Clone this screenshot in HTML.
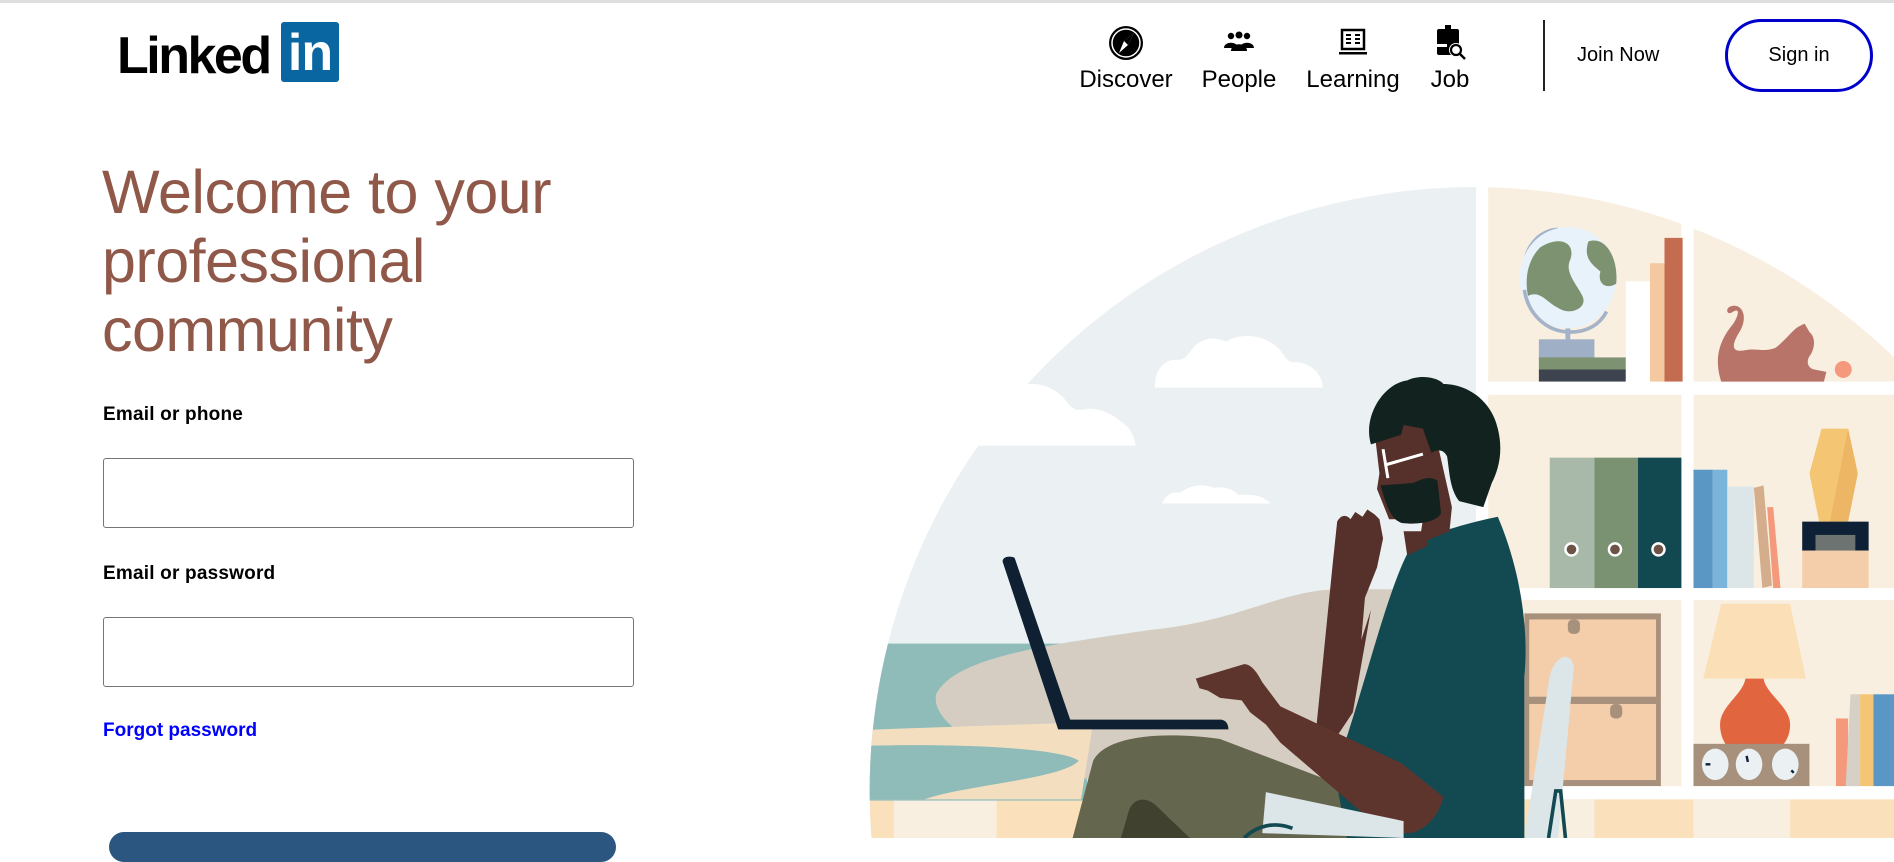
<!DOCTYPE html>
<html><head><meta charset="utf-8"><style>
*{margin:0;padding:0;box-sizing:border-box}
body{width:1894px;height:838px;overflow:hidden;background:#fff;font-family:"Liberation Sans",Arial,sans-serif;position:relative}
.topline{position:absolute;left:0;top:0;width:1894px;height:3px;background:#dedede}
.abs{position:absolute}
.logo{left:117px;top:22px;height:60px}
.linked{position:absolute;left:0;top:6px;font-size:52px;font-weight:bold;letter-spacing:-2.5px;color:#000;line-height:56px}
.in{position:absolute;left:164px;top:0;width:58px;height:60px;background:#0a66a0;border-radius:3px;color:#fff;font-weight:bold;font-size:52px;line-height:62px;text-align:center;letter-spacing:-1px}
.nav{top:24px;text-align:center;font-size:24px;color:#000}
.nav svg{display:block;margin:0 auto 4px}
.divider{left:1543px;top:20px;width:2px;height:71px;background:#222}
.join{left:1577px;top:44px;font-size:20px}
.signin{left:1725px;top:19px;width:148px;height:73px;border:3px solid #0000cc;border-radius:38px;font-size:20px;text-align:center;line-height:67px}
h1{position:absolute;left:102px;top:158px;font-weight:normal;font-size:61px;line-height:69px;color:#8f5849;letter-spacing:-0.5px}
.lbl{left:103px;font-size:19px;font-weight:bold;color:#000;letter-spacing:0.2px}
.inp{left:103px;width:531px;height:70px;border:1px solid #767676;border-radius:3px}
.forgot{left:103px;top:720px;font-size:19px;font-weight:bold;color:#0000ff}
.btn{left:109px;top:832px;width:507px;height:30px;background:#2a5680;border-radius:26px}
</style></head><body>
<div class="topline"></div>
<div class="abs logo"><div class="linked">Linked</div><div class="in">in</div></div>

<div class="abs nav" style="left:1076px;width:100px">
<svg width="38" height="38" viewBox="0 0 38 38"><circle cx="19" cy="19" r="17" fill="#000"/><circle cx="19" cy="19" r="14" fill="none" stroke="#fff" stroke-width="1.5"/><path d="M27 9 L21 21 L12 29 L17 17 Z" fill="#fff"/><path d="M27 9 L17 17 L21 21Z" fill="#000"/></svg>Discover</div>
<div class="abs nav" style="left:1189px;width:100px">
<svg width="38" height="38" viewBox="0 0 38 38"><circle cx="11" cy="12" r="3.2" fill="#000"/><circle cx="19" cy="11" r="3.5" fill="#000"/><circle cx="27" cy="12" r="3.2" fill="#000"/><path d="M4 24 C4 17 18 17 18 24 Z M20 24 C20 17 34 17 34 24Z M11 27 C11 18 27 18 27 27Z" fill="#000"/></svg>People</div>
<div class="abs nav" style="left:1303px;width:100px">
<svg width="38" height="38" viewBox="0 0 38 38"><rect x="8" y="6" width="22" height="19" fill="none" stroke="#000" stroke-width="2.5"/><path d="M12 11h5M12 15h5M12 19h5M21 11h5M21 15h5M21 19h5" stroke="#000" stroke-width="2"/><rect x="5" y="28" width="28" height="2.5" fill="#000"/></svg>Learning</div>
<div class="abs nav" style="left:1410px;width:80px">
<svg width="38" height="38" viewBox="0 0 38 38"><rect x="14" y="1" width="6" height="5" fill="#000"/><rect x="6" y="5" width="22" height="26" rx="2" fill="#000"/><rect x="6" y="20" width="10" height="3" fill="#fff"/><circle cx="25" cy="26" r="7" fill="#fff"/><circle cx="25" cy="26" r="5" fill="none" stroke="#000" stroke-width="2.2"/><path d="M29 30 L34 35" stroke="#000" stroke-width="2.5"/></svg>Job</div>
<div class="abs divider"></div>
<div class="abs join">Join Now</div>
<div class="abs signin">Sign in</div>

<h1>Welcome to your<br>professional<br>community</h1>
<div class="abs lbl" style="top:404px">Email or phone</div>
<div class="abs inp" style="top:458px"></div>
<div class="abs lbl" style="top:563px">Email or password</div>
<div class="abs inp" style="top:617px"></div>
<div class="abs forgot">Forgot password</div>
<div class="abs btn"></div>

<svg class="abs" style="left:0;top:0" width="1894" height="838" viewBox="0 0 1568 694" preserveAspectRatio="none">
<defs><clipPath id="c"><circle cx="1220" cy="655" r="500"/></clipPath></defs>
<g clip-path="url(#c)">
<rect x="700" y="140" width="870" height="560" fill="#ebf1f3"/>
<rect x="1222" y="140" width="350" height="560" fill="#fff"/>
<rect x="1232" y="150" width="160" height="166" fill="#f9efe1"/>
<rect x="1402" y="150" width="170" height="166" fill="#f9efe1"/>
<rect x="1232" y="327" width="160" height="160" fill="#f9efe1"/>
<rect x="1402" y="327" width="170" height="160" fill="#f9efe1"/>
<rect x="1232" y="497" width="160" height="154" fill="#f9efe1"/>
<rect x="1402" y="497" width="170" height="154" fill="#f9efe1"/>
<rect x="720" y="662" width="850" height="40" fill="#fae0bb"/>
<rect x="740" y="662" width="85" height="40" fill="#f9efe1"/>
<rect x="1290" y="662" width="30" height="40" fill="#f9efe1"/>
<rect x="1402" y="662" width="80" height="40" fill="#f9efe1"/>
<path d="M956,321 C956,305 965,297 975,298 C980,298 982,295 985,292 C992,280 1005,278 1015,283 C1025,276 1045,276 1058,288 C1065,296 1065,300 1072,300 C1085,300 1095,310 1095,321Z" fill="#fff"/>
<path d="M700,369 L700,318 L855,318 C870,318 880,328 885,335 C890,340 893,340 897,339 C910,336 925,345 935,355 C938,360 940,365 940,369Z" fill="#fff"/>
<path d="M962,417 C965,410 970,407 977,408 C985,402 995,400 1005,404 C1012,403 1020,404 1025,410 C1035,409 1045,410 1052,417Z" fill="#fff"/>
<rect x="700" y="533" width="200" height="130" fill="#8fbcb9"/>
<path d="M775,575 C790,545 860,535 950,522 C1030,514 1060,488 1110,488 L1160,488 L1160,660 L900,645 C820,630 770,600 775,575Z" fill="#d5cdc2"/>
<path d="M700,605 L905,598 L895,662 L700,662Z" fill="#f3dfc0"/>
<path d="M700,618 C800,615 880,620 893,630 C880,645 800,650 765,662 L700,662Z" fill="#8fbcb9"/>
<path d="M1262,235 C1258,205 1275,190 1290,190" fill="none" stroke="#a4b3c8" stroke-width="3"/>
<ellipse cx="1298" cy="230" rx="40" ry="42" fill="#e8f2fb"/>
<path d="M1275,205 C1290,195 1305,200 1300,215 C1295,225 1305,235 1310,245 C1315,255 1300,262 1290,255 C1280,250 1275,240 1265,245 C1262,230 1265,215 1275,205Z M1315,200 C1330,195 1340,215 1338,235 C1330,240 1322,235 1325,225 C1320,220 1310,215 1315,200Z" fill="#7c9270"/>
<path d="M1262,240 C1265,260 1280,275 1300,275 C1315,275 1325,268 1330,258" fill="none" stroke="#a4b3c8" stroke-width="3"/>
<rect x="1296" y="272" width="4" height="12" fill="#a4b3c8"/>
<rect x="1274" y="281" width="46" height="16" fill="#9fb0c6"/>
<rect x="1274" y="296" width="72" height="10" fill="#7c9270"/>
<rect x="1274" y="306" width="72" height="10" fill="#3d4450"/>
<rect x="1346" y="233" width="20" height="83" fill="#fff"/>
<rect x="1366" y="218" width="12" height="98" fill="#f4c8a0"/>
<rect x="1378" y="197" width="15" height="119" fill="#c46c4f"/>
<path d="M1425,316 C1418,295 1425,280 1435,268 C1440,260 1440,255 1435,258 C1430,262 1428,256 1432,254 C1442,250 1448,262 1440,275 C1432,288 1435,292 1445,290 C1455,288 1460,292 1470,288 C1478,282 1485,272 1490,270 L1494,268 L1498,275 C1504,280 1502,290 1498,295 C1495,300 1497,305 1502,306 L1512,308 L1510,316Z" fill="#b87469"/>
<circle cx="1526" cy="306" r="7" fill="#f4997b"/>
<rect x="1283" y="379" width="37" height="108" fill="#a9b9a9"/>
<rect x="1320" y="379" width="36" height="108" fill="#7a9271"/>
<rect x="1356" y="379" width="36" height="108" fill="#12484f"/>
<g fill="#6b5446" stroke="#fff" stroke-width="2"><circle cx="1301" cy="455" r="5"/><circle cx="1337" cy="455" r="5"/><circle cx="1373" cy="455" r="5"/></g>
<rect x="1402" y="389" width="16" height="98" fill="#5a97c4"/>
<rect x="1418" y="389" width="12" height="98" fill="#7ab4da"/>
<rect x="1430" y="403" width="22" height="84" fill="#dce6e9"/>
<path d="M1452,404 L1460,402 L1467,485 L1459,487Z" fill="#d4ae8c"/>
<path d="M1463,420 L1468,420 L1474,487 L1468,487Z" fill="#f4997b"/>
<path d="M1508,355 L1530,355 L1538,392 L1530,432 L1506,432 L1498,392Z" fill="#f4c673"/>
<path d="M1530,355 L1538,392 L1530,432 L1515,432Z" fill="#ecb665"/>
<rect x="1492" y="432" width="55" height="24" fill="#0d2035"/>
<rect x="1503" y="443" width="33" height="13" fill="#6d7370"/>
<rect x="1492" y="456" width="55" height="31" fill="#f4cdaa"/>
<rect x="1262" y="508" width="113" height="143" fill="#a8917c"/>
<rect x="1266" y="513" width="105" height="64" fill="#f4cdaa"/>
<rect x="1266" y="583" width="105" height="63" fill="#f4cdaa"/>
<rect x="1298" y="513" width="10" height="12" rx="4" fill="#a8917c"/>
<rect x="1333" y="583" width="10" height="12" rx="4" fill="#a8917c"/>
<path d="M1425,500 L1482,500 L1495,562 L1410,562Z" fill="#fbe0b7"/>
<path d="M1445,562 L1460,562 C1462,575 1482,585 1482,600 C1482,612 1475,618 1475,618 L1430,618 C1430,618 1424,612 1424,600 C1424,585 1443,575 1445,562Z" fill="#e1653f"/>
<rect x="1402" y="616" width="96" height="35" fill="#a8917c"/>
<g fill="#ebf1f3"><ellipse cx="1420" cy="633" rx="11" ry="13"/><ellipse cx="1448" cy="633" rx="11" ry="13"/><ellipse cx="1478" cy="633" rx="11" ry="13"/></g>
<path d="M1412,633h4M1446,626l1,5M1483,638l2,2" stroke="#0d2035" stroke-width="2"/>
<rect x="1520" y="595" width="10" height="56" fill="#f4997b"/>
<path d="M1532,575 L1540,575 L1540,651 L1528,651Z" fill="#d6d0c6"/>
<rect x="1540" y="575" width="11" height="76" fill="#f4c673"/>
<rect x="1551" y="575" width="17" height="76" fill="#5a97c4"/>
<path d="M1262,694 L1283,560 C1287,543 1300,538 1303,552 L1290,694Z" fill="#dce6e9"/>
<path d="M888,694 L905,630 C915,610 960,605 1010,612 L1110,650 L1160,694Z" fill="#65664e"/>
<path d="M928,694 L935,670 C940,660 950,660 958,668 L985,694Z" fill="#41412f"/>
<path d="M1170,450 C1190,440 1220,432 1240,428 C1258,470 1266,520 1262,560 L1262,694 L1115,694 L1105,640 C1130,570 1150,480 1170,450Z" fill="#134a52"/>
<path d="M1103,470 L1107,432 C1110,426 1115,426 1118,430 L1122,424 L1128,428 L1132,422 L1138,426 L1142,430 L1145,446 L1140,470 L1130,495 L1127,530 L1135,505 L1120,590 L1100,620 L1090,600Z" fill="#56302a"/>
<path d="M1162,440 L1180,440 L1182,452 L1165,460Z" fill="#56302a"/>
<path d="M990,562 L1030,550 C1035,550 1040,555 1045,565 L1060,585 L1160,632 L1195,660 C1190,680 1175,690 1165,690 C1150,690 1140,685 1130,675 L1060,615 L1048,600 L1035,590 L1028,580 L1010,578 L1000,572 L993,570Z" fill="#5e352d"/>
<path d="M1138,358 L1185,345 L1202,420 L1200,440 L1175,450 L1178,430 L1150,430 L1140,405 L1142,392 Z" fill="#56302a"/>
<path d="M1135,368 C1128,345 1145,318 1165,315 C1175,310 1190,312 1195,318 C1215,318 1235,332 1240,355 C1245,375 1240,390 1235,400 L1228,420 L1208,415 C1200,405 1200,390 1198,378 C1195,372 1190,372 1185,375 L1178,355 L1162,352 L1160,360Z" fill="#11221f"/>
<path d="M1143,402 L1170,400 C1180,395 1185,395 1190,398 L1193,425 C1190,432 1175,435 1160,433 C1152,430 1148,420 1143,402Z" fill="#11221f"/>
<path d="M1145,372 L1149,396 M1147,385 L1178,376" stroke="#fff" stroke-width="2.5"/>
<path d="M830,465 C830,461 836,460 840,462 L886,596 L1010,596 C1015,596 1017,600 1017,604 L876,604Z" fill="#0e2032"/>
<path d="M1048,656 L1162,680 L1162,694 L1045,690Z" fill="#dce6e9"/>
<path d="M1030,694 C1040,684 1055,680 1070,686" fill="none" stroke="#134a52" stroke-width="3"/>
<path d="M1282,694 L1288,655 L1292,655 L1296,694" fill="none" stroke="#134a52" stroke-width="3"/>
</g>
</svg>
</body></html>
